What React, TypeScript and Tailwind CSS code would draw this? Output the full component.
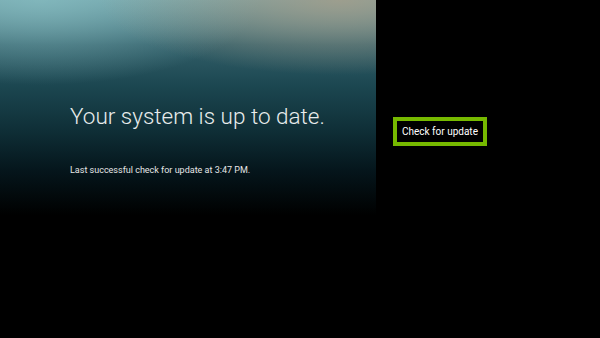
export default function App() {
  return (
    <div className="flex h-[338px] w-[600px] bg-black font-['Roboto',sans-serif]">
      {/* left info panel with misty backdrop */}
      <div className="flex h-full w-[376px] flex-col bg-[radial-gradient(ellipse_240px_75px_at_340px_0px,rgba(165,158,138,0.85),transparent),radial-gradient(ellipse_220px_85px_at_40px_0px,rgba(135,190,195,0.75),transparent),linear-gradient(to_bottom,#6e9ea4_0px,#325f69_45px,#1c4751_85px,#0f2f37_130px,#05161c_170px,#000_215px)] pl-[70px] pt-[101px]">
        <h1 className="text-[22.5px] leading-[30px] font-light text-[#e8ecec]">
          Your system is up to date.
        </h1>
        <p className="mt-[33px] text-[9px] leading-[12px] text-[#e6e6e6]">
          Last successful check for update at 3:47 PM.
        </p>
      </div>
      <div className="flex-1 pl-[17px] pt-[117px]">
        <button className="flex h-[29px] items-center border-[4px] border-[#76b900] bg-black px-[5px] text-[10px] text-white">
          Check for update
        </button>
      </div>
    </div>
  );
}
